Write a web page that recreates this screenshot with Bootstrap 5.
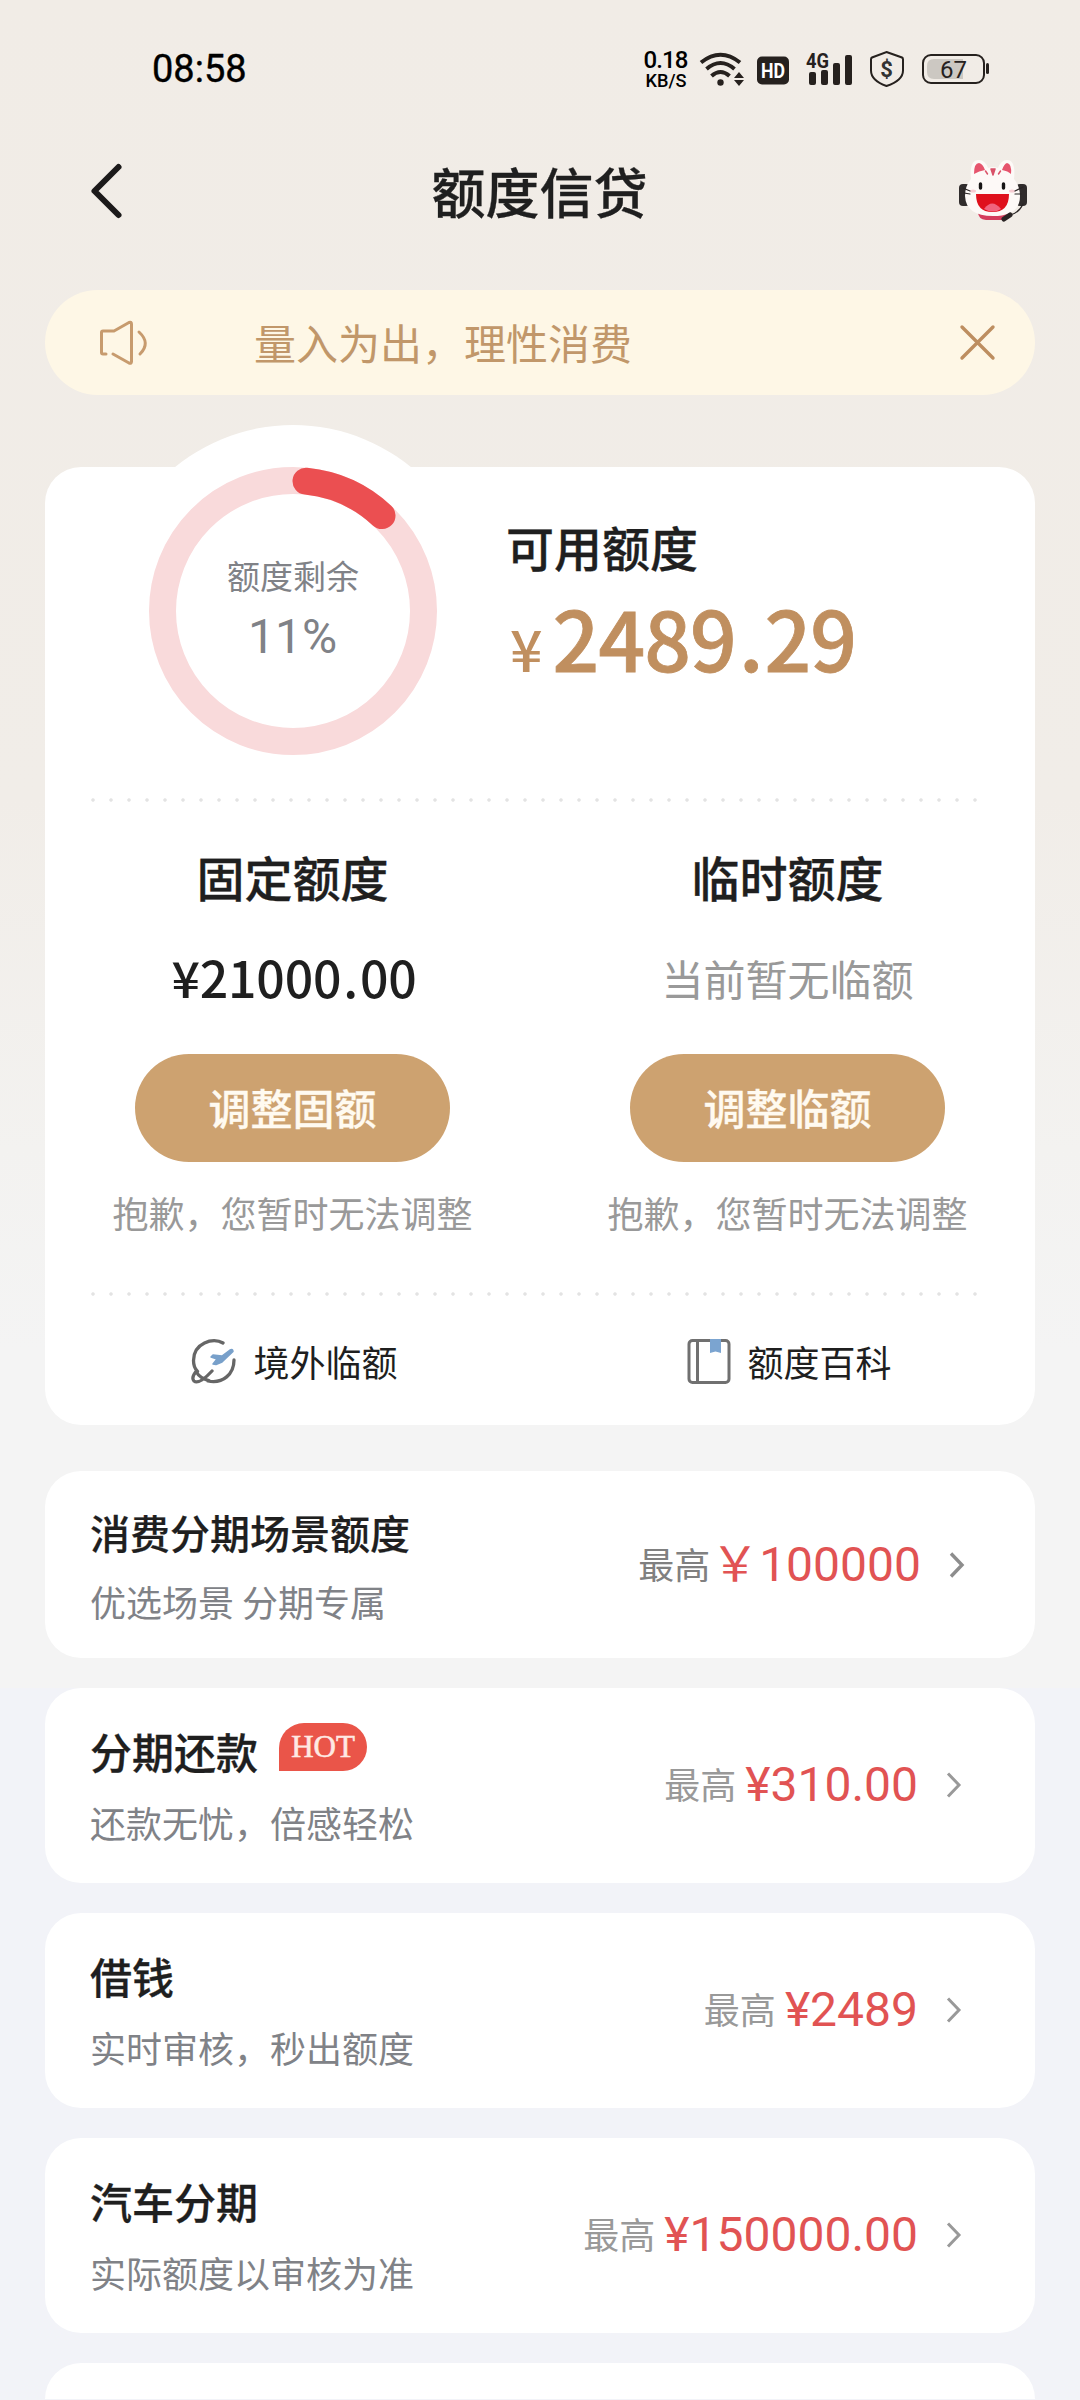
<!DOCTYPE html>
<html lang="zh-CN">
<head>
<meta charset="utf-8">
<meta name="viewport" content="width=device-width, initial-scale=1">
<title>额度信贷</title>
<link href="https://cdn.jsdelivr.net/npm/bootstrap@5.3.0/dist/css/bootstrap.min.css" rel="stylesheet">
<style>
html{background:#f2f3f8}
body{width:1080px;height:2400px;overflow:hidden;color:#1f1f1f;font-family:"Noto Sans CJK SC",sans-serif;
 background:linear-gradient(#f1ece6 0,#f1ede8 800px,#f3f2f0 1150px,#f4f4f4 1350px,#f4f4f4 1688px,#f2f3f8 1688px)}
svg{display:block;flex:none}
.status-bar{height:137px}
.clock{font:400 38px/38px Roboto,sans-serif;color:#000;-webkit-text-stroke:.4px #000;margin-left:152px;margin-right:392px;width:98px}
.nav-head{height:110px;padding:0 51px 2px 88px}
.nav-title{font-size:54px;line-height:54px}
.mid,.offer h2,.btn-gold{font-weight:500;-webkit-text-stroke:.3px currentColor}
.notice{height:105px;border-radius:53px;margin:43px 45px 0;background:#fef7e6;color:#c1976a;font-size:42px;line-height:42px;padding:0 37px 0 54px}
.notice-text{margin-left:105px;padding-bottom:1px}
.panel{background:#fff;border-radius:36px;margin:0 45px}
.quota{margin-top:72px;height:958px}
.summary{height:331px;padding-left:62px}
.gauge{margin-top:-42px}
.quota-title{font-size:48px;line-height:48px}
.avail{padding:55px 0 0 27px}
.total{color:#c08f5f;font-size:82px;line-height:85px;font-weight:500;letter-spacing:-.9px;-webkit-text-stroke:.8px #c08f5f;margin:24px 0 0 4px}
.total .yuan{font-size:57px;line-height:1;margin-right:11px;-webkit-text-stroke-width:0}
.total .point{margin:0 2px 0 3px}
.dots{height:4px;width:888px;margin-left:45px;background:radial-gradient(circle at 3px 2px,#e3e3e3 1.3px,transparent 2.2px) 0 0/18px 4px repeat-x}
.limit{padding-top:50px}
.line-3{height:52px;margin-top:51px}
.fixed-sum{font-size:50px;line-height:50px;font-weight:500;letter-spacing:-.2px;padding-left:3px}
.fixed-sum .point{margin:0 2px}
.no-temp{font-size:42px;color:#999}
.btn-gold{width:315px;height:108px;border:0;border-radius:54px;margin-top:51px;padding:0 0 2px;background:#cda270!important;color:#fffaf0!important;font-size:42px;line-height:42px}
.sorry{font-size:36px;line-height:36px;margin-top:32px;margin-bottom:62px;color:#999}
.links{height:129px;font-size:36px;line-height:36px}
.links svg{margin-right:16px}
.offer{height:195px;margin-top:30px;padding:42px 73px 0 45px}
.offer h2{font-size:42px;line-height:42px;margin:0}
.offer p{font-size:36px;line-height:36px;margin:32px 0 0;color:#808287}
.offer.first{height:187px;margin-top:46px;padding-top:41px;padding-right:70px}
.offer.first h2{font-size:40px;line-height:40px;-webkit-text-stroke-width:.2px}
.offer.first p{margin-top:31px}
.offer.tail{height:36px;padding:0;border-radius:36px 36px 0 0}
.offer-sum{margin-top:-42px;height:193px;color:#999;font-size:36px;line-height:36px}
.first .offer-sum{margin-top:-41px;height:188px;color:#808080}
.cash{font:400 48px/48px Roboto,sans-serif;color:#e15353;margin:0 28px 0 9px}
.first .cash{margin:0 28px 0 1px}
.hot{width:88px;height:48px;border-radius:25px 24px 24px 0;background:#ea5549;color:#ffe9e3;font:400 31px/48px "Liberation Serif",serif;-webkit-text-stroke:.6px #ffe9e3;text-align:center;margin:-7px 0 -7px 21px}
</style>
</head>
<body>
<header>
 <div class="status-bar d-flex align-items-center">
  <div class="clock">08:58</div>
  <svg width="350" height="44" viewBox="642 46 350 44" fill="none" stroke="#26211e" font-family="Roboto,sans-serif">
   <g fill="#000" stroke="none" font-weight="500" text-anchor="middle"><text x="666" y="67" font-size="24" textLength="45">0.18</text><text x="666" y="85.500" font-size="18" textLength="41" lengthAdjust="spacingAndGlyphs">KB/S</text></g>
   <g stroke-width="4"><path d="M701 61.500Q720.500 46 740 61.500M706.500 68Q720.500 56 734.500 68M711.500 75Q720.500 67 729.500 75"/></g>
   <g fill="#26211e" stroke="none"><circle cx="720.500" cy="81.500" r="3.200"/><path d="M739 71l5 6h-10zM739 85l5-6h-10z"/><rect x="757" y="55.500" width="32" height="28" rx="5"/>
   <text x="773" y="77" fill="#fff" font-size="21" font-weight="700" text-anchor="middle" textLength="24" lengthAdjust="spacingAndGlyphs">HD</text>
   <text x="806" y="67" font-size="21" font-weight="700" textLength="23" lengthAdjust="spacingAndGlyphs">4G</text>
   <path d="M809 73q0-2 2-2h3q2 0 2 2v9q0 2-2 2h-3q-2 0-2-2zM821 71q0-2 2-2h3q2 0 2 2v11q0 2-2 2h-3q-2 0-2-2zM833 64q0-2 2-2h3q2 0 2 2v18q0 2-2 2h-3q-2 0-2-2zM845 56q0-2 2-2h3q2 0 2 2v26q0 2-2 2h-3q-2 0-2-2z"/>
   <text x="886.500" y="75.500" font-size="22" font-weight="700" text-anchor="middle" fill="#333">$</text></g>
   <path stroke-width="2" d="M886.500 51L902 56.500q1 .500 1 2v11q0 10-16.500 15.500Q871 79.500 871 69.500v-11q0-1.500 1-2z"/>
   <rect x="923" y="54" width="61" height="28" rx="8" stroke-width="2"/><path d="M934 58h29v20h-29q-7 0-7-7v-6q0-7 7-7z" fill="#ccc8c2" stroke="none"/><rect x="986" y="62" width="3" height="11" rx="1.500" fill="#26211e" stroke="none"/>
   <text x="953.500" y="76.500" font-size="24" text-anchor="middle" fill="#26211e" stroke="none">67</text>
  </svg>
 </div>
 <div class="nav-head d-flex align-items-center justify-content-between">
  <svg width="36" height="62" viewBox="88 160 36 62" fill="none" stroke="#1c1a1a" stroke-width="6" stroke-linecap="round" stroke-linejoin="round"><path d="M118.500 167L94.500 191l24 24"/></svg>
  <div class="nav-title mid">额度信贷</div>
  <svg width="74" height="66" viewBox="955 157 74 66" stroke-linecap="round" stroke-linejoin="round">
   <rect x="959" y="183" width="11" height="22" rx="4" fill="#302c2c"/><rect x="1016" y="183" width="11" height="22" rx="4" fill="#302c2c"/>
   <path d="M978 211h32q0 7-8 8h-16q-8-1-8-8z" fill="#d43c5c"/>
   <path d="M971 178q-2-19 8-19 6 0 9 8 5-2 10 0 3-8 9-8 9 0 7 19 6 7 6 17 0 20-27 20-27 0-28-20 0-10 6-17z" fill="#fdf9f7"/>
   <path d="M974 173q0-11 5-11 4 1 6 7-6 1-11 4zM1002 169q2-6 5-7 5 1 4 11-3-3-9-4z" fill="#e6546d"/>
   <path d="M991 168l2 6 2-6zM985.500 170l2 3M1000.500 170l-2 3" stroke="#d95269" stroke-width="1.500" fill="#d95269"/>
   <path d="M980.500 183v4M1003.500 183v4" stroke="#171515" stroke-width="3.400"/>
   <path d="M976 193h33q0 18-16.500 18T976 193z" fill="#df101c"/><path d="M984 208q8-11 17 0-8 5-17 0z" fill="#f0647e"/>
   <ellipse cx="973" cy="190" rx="3" ry="1.500" fill="#f6ccd2"/><ellipse cx="1012" cy="190" rx="3" ry="1.500" fill="#f6ccd2"/>
   <path d="M963 187l7 3M964 192l6 1M1015 190l8-4M1015 193l6 0M1023 203q-4 9-13 11" stroke="#292424" stroke-width="1.200" fill="none"/><path d="M1004 218l6-4" stroke="#292424" stroke-width="5"/>
  </svg>
 </div>
</header>
<div class="notice d-flex align-items-center">
 <svg width="50" height="46" viewBox="99 320 50 46" fill="none" stroke="#c79b6e" stroke-width="3" stroke-linecap="round" stroke-linejoin="round"><path d="M106 354h-3q-1.500 0-1.500-1.500v-20q0-1.500 1.500-1.500H114l15-8.500q2.500-1 2.500 1.500v37.500q0 2.500-2.500 1.500L113 354M139 332q12 11 1 22"/></svg>
 <div class="notice-text me-auto">量入为出，理性消费</div>
 <svg width="40" height="40" viewBox="0 0 40 40" stroke="#bd8e60" stroke-width="3.400" stroke-linecap="round"><path d="M4 4l31 31M35 4L4 35"/></svg>
</div>
<main>
 <section class="panel quota">
  <div class="summary d-flex align-items-start">
   <svg class="gauge" width="372" height="372" viewBox="-186 -186 372 372" fill="none" text-anchor="middle">
    <circle r="186" fill="#fff"/><circle r="130.500" stroke="#f9dadb" stroke-width="27"/>
    <path d="M13 -129.850A130.500 130.500 0 0 1 89 -95.440" stroke="#eb4f51" stroke-width="27" stroke-linecap="round"/>
    <text x="0" y="-22" font-size="33" fill="#808287">额度剩余</text><text x="-.5" y="42" font-size="48" font-family="Roboto,sans-serif" fill="#808287">11%</text>
   </svg>
   <div class="avail"><div class="quota-title mid">可用额度</div><div class="total"><span class="yuan">¥</span>2489<span class="point">.</span>29</div></div>
  </div>
  <div class="dots"></div>
  <div class="row g-0 text-center">
   <div class="col-6 limit"><div class="quota-title mid">固定额度</div><div class="line-3 fixed-sum">¥21000<span class="point">.</span>00</div><button class="btn btn-gold">调整固额</button><div class="sorry">抱歉，您暂时无法调整</div></div>
   <div class="col-6 limit"><div class="quota-title mid">临时额度</div><div class="line-3 no-temp d-flex align-items-center justify-content-center">当前暂无临额</div><button class="btn btn-gold">调整临额</button><div class="sorry">抱歉，您暂时无法调整</div></div>
  </div>
  <div class="dots"></div>
  <div class="row g-0 links">
   <div class="col-6 d-flex align-items-center justify-content-center ps-1">
    <svg width="46" height="46" viewBox="0 0 46 46" fill="none" stroke="#666" stroke-width="3.300" stroke-linecap="round"><path d="M32 5C22-1 2.500 5 2.500 22.500q0 7 4 11M17 43c15 3 26-7 26-21M21 33Q8 47 3 43 0 40 5 33.500q4 7 13 9"/><path d="M39 12q3-1.500 3 1.500l-11 10.500-6 2.500-3-.500 4-5-6-2 2-2 9 1z" fill="#78a0ca" stroke="#78a0ca" stroke-width="1.500" stroke-linejoin="round"/></svg>境外临额</div>
   <div class="col-6 d-flex align-items-center justify-content-center ps-1">
    <svg width="44" height="46" viewBox="0 0 44 46" fill="none" stroke="#707070" stroke-width="3"><rect x="2" y="2.500" width="40" height="42" rx="3.500"/><path d="M10.500 3v41"/><path d="M23 1h11v14l-5.500-1.500L23 15z" fill="#7ba4d0" stroke="none"/></svg>额度百科</div>
  </div>
 </section>
 <section class="panel offer first d-flex justify-content-between"><div><h2>消费分期场景额度</h2><p>优选场景 分期专属</p></div><div class="offer-sum d-flex align-items-center"><span class="pb-1">最高</span><span class="cash">￥100000</span><svg width="16" height="26" viewBox="0 0 16 26" fill="none" stroke="#8d8d8d" stroke-width="3.400"><path d="M2 1.500L13 13 2 24.500"/></svg></div></section>
 <section class="panel offer d-flex justify-content-between"><div><div class="d-flex"><h2>分期还款</h2><span class="hot">HOT</span></div><p>还款无忧，倍感轻松</p></div><div class="offer-sum d-flex align-items-center"><span class="pb-1">最高</span><span class="cash">¥310.00</span><svg width="16" height="26" viewBox="0 0 16 26" fill="none" stroke="#999" stroke-width="3"><path d="M2 1.500L13 13 2 24.500"/></svg></div></section>
 <section class="panel offer d-flex justify-content-between"><div><h2>借钱</h2><p>实时审核，秒出额度</p></div><div class="offer-sum d-flex align-items-center"><span class="pb-1">最高</span><span class="cash">¥2489</span><svg width="16" height="26" viewBox="0 0 16 26" fill="none" stroke="#999" stroke-width="3"><path d="M2 1.500L13 13 2 24.500"/></svg></div></section>
 <section class="panel offer d-flex justify-content-between"><div><h2>汽车分期</h2><p>实际额度以审核为准</p></div><div class="offer-sum d-flex align-items-center"><span class="pb-1">最高</span><span class="cash">¥150000.00</span><svg width="16" height="26" viewBox="0 0 16 26" fill="none" stroke="#999" stroke-width="3"><path d="M2 1.500L13 13 2 24.500"/></svg></div></section>
 <section class="panel offer tail"></section>
</main>
<script src="https://cdn.jsdelivr.net/npm/bootstrap@5.3.0/dist/js/bootstrap.bundle.min.js"></script>
</body>
</html>
